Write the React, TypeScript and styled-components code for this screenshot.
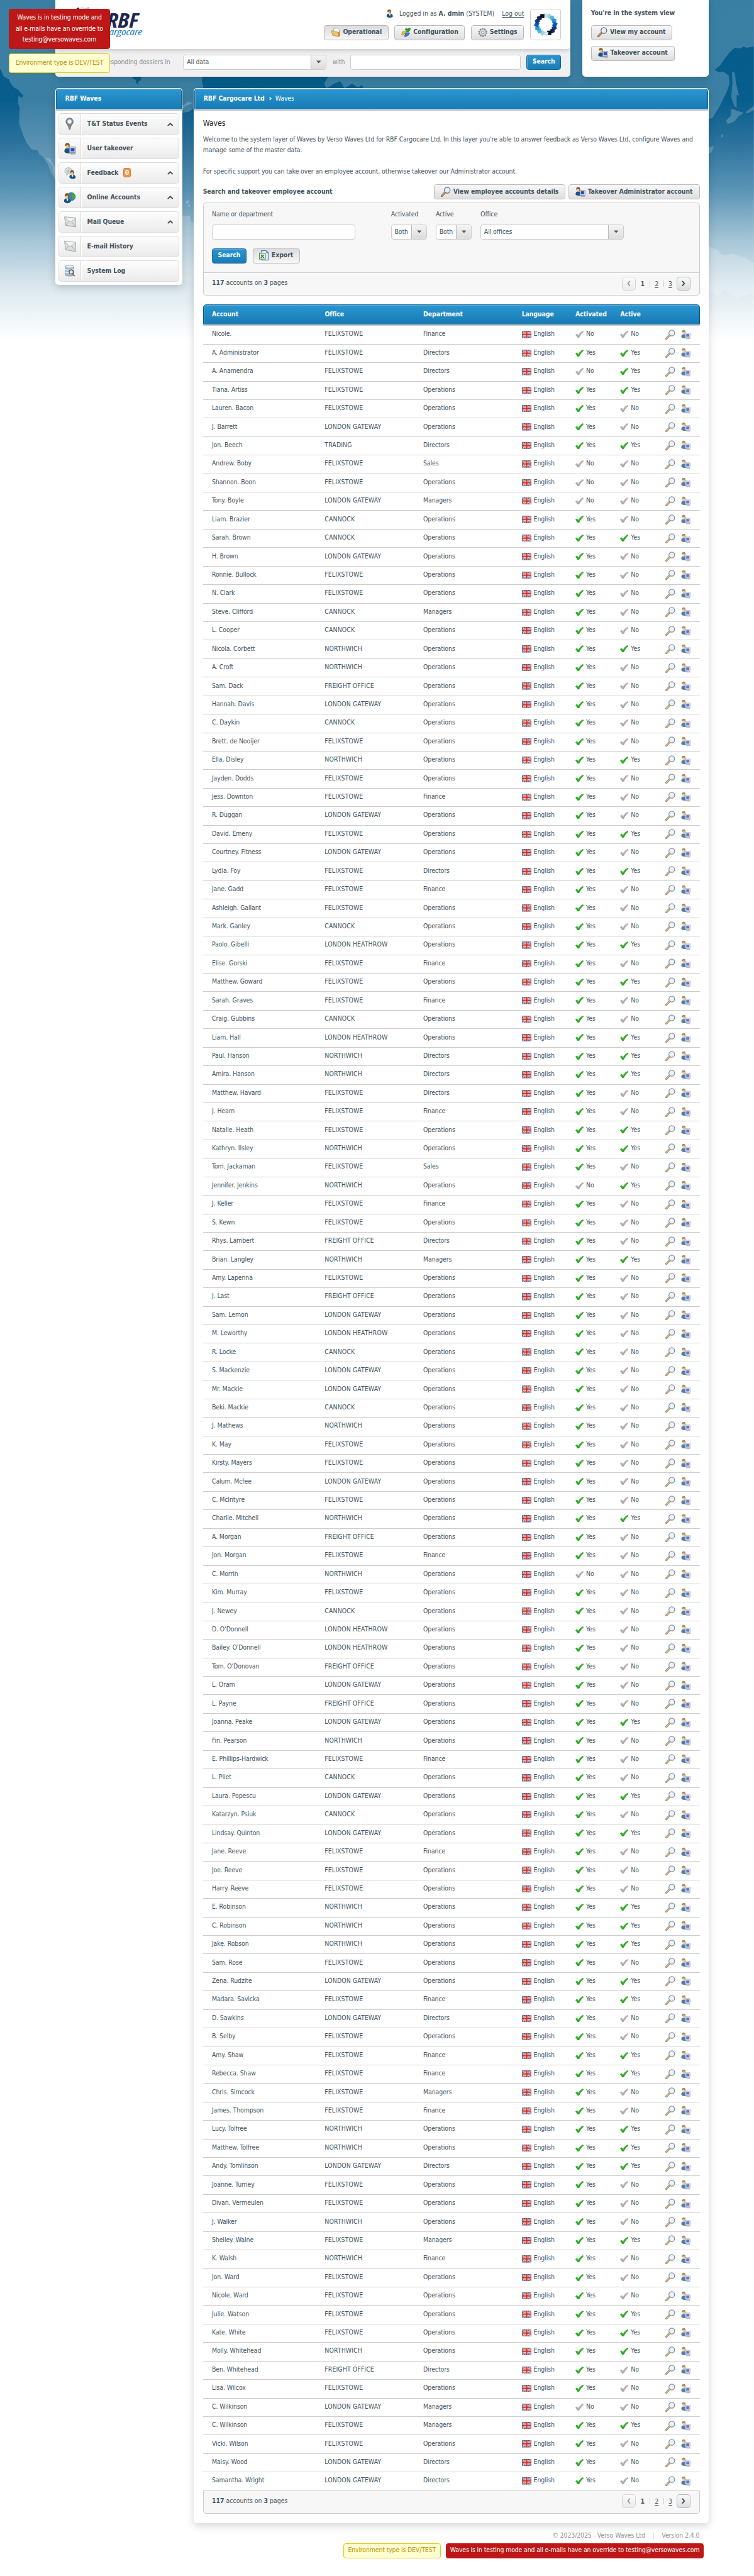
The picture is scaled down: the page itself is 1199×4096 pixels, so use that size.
import React from "react";
import styled, { createGlobalStyle, css } from "styled-components";

const GlobalStyle = createGlobalStyle`
  *, *::before, *::after { box-sizing: border-box; }
  html, body { margin: 0; padding: 0; background: #fff; overflow: hidden; }
`;

const ink = "#44555f";
const line = "#cccccc";

const Page = styled.div`
  zoom: 0.94925;
  position: relative;
  width: 1263px;
  height: 4315px;
  padding-left: 93px;
  overflow: hidden;
  background: #fff;
  color: ${ink};
  font-family: "DejaVu Sans Condensed", "DejaVu Sans", Tahoma, sans-serif;
  font-stretch: condensed;
  font-size: 11px;
  line-height: 18px;
  letter-spacing: -0.096px;
`;

const Backdrop = styled.svg`
  position: absolute;
  left: 0;
  top: 0;
`;

const Wrap = styled.div`
  position: relative;
  width: 1094px;
`;

const Columns = styled.div<{ $top?: number }>`
  display: flex;
  align-items: flex-start;
  gap: 20px;
  margin-top: ${(p) => p.$top ?? 0}px;
`;

const shadow = css`
  box-shadow: 0 4px 14px rgba(0, 0, 0, 0.17);
`;

/* ---------- header ---------- */

const Header = styled.header`
  width: 862px;
  height: 128px;
  background: #f0f0f0;
  border-radius: 0 0 5px 5px;
  overflow: hidden;
  ${shadow}
`;

const HeaderTop = styled.div`
  display: flex;
  justify-content: space-between;
  height: 82px;
  padding: 0 15px;
  background: #fff;
  border-radius: 0 0 5px 5px;
  box-shadow: 0 2px 8px rgba(0, 0, 0, 0.18);
`;

const Brand = styled.div`
  width: 150px;
  padding: 8px 0 0 16px;
`;

const UserArea = styled.div`
  display: flex;
  gap: 10px;
  padding-top: 15px;
`;

const UserStack = styled.div`
  display: flex;
  flex-direction: column;
  align-items: flex-end;
`;

const LoginLine = styled.div`
  display: flex;
  align-items: center;
  height: 16px;
  margin-bottom: 11px;
  white-space: pre;
  letter-spacing: 0;

  svg { margin-right: 10px; }
`;

const Link = styled.a<{ $gap?: number }>`
  margin-left: ${(p) => p.$gap ?? 0}px;
  color: ${ink};
  text-decoration: underline;
  text-underline-offset: 2px;
`;

const ButtonRow = styled.div<{ $gap: number }>`
  display: flex;
  align-items: center;
  gap: ${(p) => p.$gap}px;
`;

const LogoBox = styled.div`
  display: flex;
  align-items: center;
  justify-content: center;
  width: 52px;
  height: 52px;
  border: 1px solid ${line};
  border-radius: 4px;
  background: #fff;
`;

const SearchBar = styled.div`
  display: flex;
  align-items: center;
  height: 46px;
  padding: 0 15px 2px;
  color: #8c8c8c;
`;

const SearchLabel = styled.span<{ $width: number; $after?: number }>`
  width: ${(p) => p.$width}px;
  margin-right: ${(p) => p.$after ?? 0}px;
  text-align: right;
  white-space: nowrap;
`;

const Button = styled.button<{ $width: number; $pressed?: boolean; $primary?: boolean }>`
  display: flex;
  align-items: center;
  justify-content: center;
  gap: 4px;
  flex: none;
  width: ${(p) => p.$width}px;
  height: 25px;
  margin: 0;
  padding: 0 0 1px;
  border: 1px solid #bbb;
  border-radius: 4px;
  background: ${(p) =>
    p.$pressed ? "linear-gradient(#dcdcdc, #f6f6f6)" : "linear-gradient(#f8f8f8, #dedede)"};
  color: ${ink};
  font: inherit;
  font-weight: bold;
  letter-spacing: -0.08px;
  white-space: nowrap;

  span { padding-bottom: 1px; }

  ${(p) =>
    p.$primary &&
    css`
      border-color: #0d5f92;
      background: linear-gradient(#2a94d0, #187cb5);
      box-shadow: inset 1px 1px 0 #4ba9dc;
      color: #fff;
    `}
`;

const Input = styled.input<{ $width: number }>`
  flex: none;
  width: ${(p) => p.$width}px;
  height: 25px;
  border: 1px solid ${line};
  border-radius: 4px;
  background: #fff;
`;

const SelectBox = styled.div<{ $width: number }>`
  display: flex;
  flex: none;
  width: ${(p) => p.$width}px;
  height: 25px;
  border: 1px solid ${line};
  border-radius: 4px;
  background: #fff;
  color: ${ink};
  overflow: hidden;

  > span { flex: 1; padding: 2px 0 0 5px; white-space: nowrap; }
`;

const SelectArrow = styled.i`
  display: flex;
  align-items: center;
  justify-content: center;
  width: 25px;
  border-left: 1px solid #bbb;
  background: linear-gradient(#f4f4f4, #dcdcdc);
`;

const SystemPanel = styled.aside`
  display: flex;
  flex-direction: column;
  width: 212px;
  height: 128px;
  padding: 13px 15px 0;
  border-radius: 0 0 5px 5px;
  background: #fff;
  ${shadow}

  strong { height: 29px; }
  button { margin-bottom: 10px; }
`;

/* ---------- panels ---------- */

const Panel = styled.section<{ $width: number; $height: number }>`
  flex: none;
  width: ${(p) => p.$width}px;
  height: ${(p) => p.$height}px;
  padding: 1px;
  border-radius: 5px;
  background: #fff;
  ${shadow}
`;

const TitleBar = styled.div`
  display: flex;
  align-items: center;
  height: 34px;
  padding: 0 14px 2px 14px;
  border: 1px solid #0b5a8a;
  border-radius: 4px 4px 0 0;
  background: linear-gradient(#2a96d2, #187bb3);
  box-shadow: inset 1px 1px 0 #4ba9dc, 0 1px 0 #fff, 0 2px 0 ${line};
  color: #fff;
  white-space: nowrap;

  svg { margin: 0 6px 0 8px; }
`;

const Menu = styled.nav`
  display: flex;
  flex-direction: column;
  gap: 5px;
  padding: 7px 4px 0;
`;

const MenuItem = styled.a`
  display: flex;
  align-items: center;
  height: 36px;
  border: 1px solid #dadada;
  border-radius: 5px;
  background: linear-gradient(#fdfdfd, #ebebeb);
  font-weight: bold;

  > span { flex: 1; padding: 0 0 1px 10px; }
`;

const MenuIcon = styled.i`
  display: flex;
  align-items: center;
  justify-content: center;
  width: 37px;
  height: 34px;
  border-right: 1px solid #dadada;
  box-shadow: 1px 0 0 #fff;
`;

const Chevron = styled.svg`
  margin-right: 9px;
`;

const CountBadge = styled.em`
  display: inline-block;
  height: 16px;
  margin-left: 8px;
  padding: 0 2px;
  border: 1px solid #e07b1c;
  border-radius: 3px;
  background: #f39549;
  color: #fff;
  font-style: normal;
  line-height: 14px;
`;

const Body = styled.div`
  padding: 15px 14px 0;
`;

const Heading = styled.h1`
  height: 26px;
  margin: 0;
  color: #222;
  font-size: 13px;
  font-weight: normal;
  line-height: 18px;
`;

const Text = styled.p`
  height: 85px;
  margin: 0;
  white-space: pre;
`;

const ActionRow = styled.div`
  display: flex;
  align-items: flex-start;
  justify-content: space-between;
  height: 30px;

  strong { padding-top: 3px; }
`;

const FilterBox = styled.div`
  height: 156px;
  border: 1px solid ${line};
  border-radius: 5px;
  background: #f7f7f7;
`;

const Filters = styled.div`
  display: flex;
  gap: 15px;
  height: 76px;
  padding: 10px 14px 0;
`;

const Field = styled.label<{ $after?: number }>`
  display: flex;
  flex-direction: column;
  gap: 8px;
  margin-right: ${(p) => p.$after ?? 0}px;
`;

const FilterActions = styled.div`
  display: flex;
  gap: 10px;
  height: 41px;
  padding: 0 14px;
  border-bottom: 1px solid ${line};
  box-shadow: 0 1px 0 #fff;
`;

const Summary = styled.div<{ $boxed?: boolean }>`
  display: flex;
  align-items: center;
  justify-content: space-between;
  height: 38px;
  padding: 0 14px 2px;

  ${(p) =>
    p.$boxed &&
    css`
      height: 39px;
      border: 1px solid ${line};
      border-radius: 0 0 5px 5px;
      background: #f7f7f7;
    `}
`;

const Total = styled.span`
  padding-bottom: 2px;
  letter-spacing: 0;
`;

const Pager = styled.div`
  display: flex;
  align-items: center;
`;

const PageButton = styled.button<{ $off?: boolean }>`
  display: flex;
  align-items: center;
  justify-content: center;
  width: 23px;
  height: 23px;
  padding: 0;
  border: 1px solid ${(p) => (p.$off ? "#d6d6d6" : "#b5b5b5")};
  border-radius: 5px;
  background: ${(p) => (p.$off ? "linear-gradient(#fafafa, #ebebeb)" : "linear-gradient(#f8f8f8, #dedede)")};
`;

const PageNumber = styled.span<{ $current?: boolean; $first?: boolean }>`
  width: 23px;
  border-left: ${(p) => (p.$first ? "none" : `1px solid ${line}`)};
  font-weight: ${(p) => (p.$current ? "bold" : "normal")};
  text-align: center;
  text-decoration: ${(p) => (p.$current ? "none" : "underline")};
  text-underline-offset: 2px;
  line-height: 11px;
`;

/* ---------- table ---------- */

const columns = css`
  display: grid;
  grid-template-columns: 189px 165px 165px 90px 75px 76px 26px 16px;
  align-items: center;
  padding-left: 15px;
`;

const TableHead = styled.div`
  ${columns}
  height: 34px;
  margin-top: 15px;
  padding: 0 0 2px 14px;
  border: 1px solid #0b5a8a;
  border-radius: 5px 5px 0 0;
  background: linear-gradient(#2a96d2, #187bb3);
  box-shadow: inset 1px 1px 0 #4ba9dc;
  color: #fff;
  font-weight: bold;
`;

const Rows = styled.div`
  padding-top: 1px;
`;

const Row = styled.div`
  ${columns}
  height: 31px;
  padding-bottom: 3px;
  border-top: 1px solid ${line};
  white-space: nowrap;
`;

const Office = styled.span`
  letter-spacing: 0.1px;
`;

const IconText = styled.span<{ $gap: number }>`
  display: flex;
  align-items: center;
  gap: ${(p) => p.$gap}px;

  svg { position: relative; top: 1px; }
`;

const Action = styled.span`
  display: flex;
  padding-top: 2px;
  opacity: 0.75;
`;

/* ---------- notices and footer ---------- */

const notice = {
  red: css`background: #bd1717; border-color: #bd1717; color: #fff;`,
  yellow: css`background: #ffffcf; border-color: #dfcb11; color: #b9940b;`,
};

const Notice = styled.div<{ $tone: "red" | "yellow"; $width: number; $height: number }>`
  display: flex;
  align-items: center;
  justify-content: center;
  width: ${(p) => p.$width}px;
  height: ${(p) => p.$height}px;
  padding-bottom: 2px;
  border: 1px solid;
  border-radius: 4px;
  letter-spacing: -0.145px;
  text-align: center;
  white-space: pre;
  ${(p) => notice[p.$tone]}
`;

const FloatingNotices = styled.div`
  position: absolute;
  left: 15px;
  top: 15px;
  display: flex;
  flex-direction: column;
  gap: 8px;
`;

const Footer = styled.footer`
  display: flex;
  flex-direction: column;
  gap: 4px;
  align-items: flex-end;
  padding-top: 12px;
`;

const Copyright = styled.div`
  display: flex;
  padding-right: 15px;
  color: #8f8f8f;

  i { width: 28px; text-align: center; font-style: normal; color: ${line}; }
`;

const NoticeRow = styled.div`
  display: flex;
  gap: 9px;
  padding-right: 8px;
`;

/* ---------- icons ---------- */

const Magnifier = () => (
  <svg width="17" height="17" viewBox="0 0 17 17">
    <path d="M1.6 15.4 7 9.6" stroke="#7d5a34" strokeWidth="3.2" strokeLinecap="round" />
    <path d="M1.8 15 7 9.4" stroke="#d6a86b" strokeWidth="1.5" strokeLinecap="round" />
    <circle cx="10.8" cy="5.8" r="4.8" fill="#dff0fb" stroke="#5c6672" strokeWidth="1.3" />
    <path d="M7.8 5.2a3.2 3.2 0 0 1 3-2.6" stroke="#fff" strokeWidth="1.2" fill="none" />
  </svg>
);

const Person = ({ size = 14 }: { size?: number }) => (
  <svg width={(size * 12) / 14} height={size} viewBox="0 0 12 14">
    <path d="M.8 11.2C.6 8.6 2 7.2 4.2 7.2h2.600c2.600 0 4.600 1.600 4.400 4.600-.8 1.400-2.800 2-5 2s-4.600-.8-5.400-2.600Z" fill="#1a5480" />
    <path d="m4 7.400 2.600 3.800L7.400 7.400Z" fill="#e9f1f6" />
    <ellipse cx="5.2" cy="4" rx="2.7" ry="3.5" fill="#eac48c" />
    <path d="M2.2 4.6C1.600 1.800 3 .2 5.400.2c2.400 0 3.600 1.800 3 4.800-.3 1.400-.8 2-1.400 2.200.3-2 .1-3.200-.8-4.200-1.400.8-2.800.8-4 1.600Z" fill="#7a5326" />
  </svg>
);

const PersonScreen = ({ size = 17 }: { size?: number }) => (
  <svg width={size} height={size} viewBox="0 0 17 17">
    <path d="M.5 13C.1 9.600 1.400 7.800 3.800 7.800H6.500c2 0 3.200 1 3.400 3V14.500C6 15.600 2 15.200.5 13Z" fill="#1a5480" />
    <ellipse cx="5" cy="4.200" rx="2.600" ry="3.600" fill="#eac48c" />
    <path d="M1.400 5C.8 2 2.400.2 4.800.2s3.700 1.800 3 5c-.3 1.200-.7 1.900-1.300 2.200.2-2 0-3.200-.9-4.200-1.200.7-3 .9-4.200 1.800Z" fill="#8a6230" />
    <rect x="7.700" y="6" width="8.600" height="8" fill="#d5d8da" stroke="#8a8f94" strokeWidth=".8" />
    <rect x="9.300" y="7.500" width="5.400" height="4.700" fill="#2848e0" />
    <path d="M9.500 16.200h6.500l-1-2H10Z" fill="#b4b8bb" stroke="#85898c" strokeWidth=".6" />
  </svg>
);

const Pin = () => (
  <svg width="14" height="21" viewBox="0 0 14 21">
    <path d="M7 .7a6 6 0 0 1 6 6.200c0 4-4.300 5.500-5.300 13h-1.400C5.300 12.400 1 10.900 1 6.900A6 6 0 0 1 7 .7Z" fill="#7d858b" stroke="#666d72" />
    <circle cx="7" cy="6.700" r="3.700" fill="#eef5fa" stroke="#a8b3ba" />
  </svg>
);

const Feedback = () => (
  <svg width="20" height="20" viewBox="0 0 20 20">
    <path d="M2.500 9.500C0 6.500 1 2 5.500 1 10 .2 13.500 2.500 13 6.500c-.5 3.500-4 4.800-6.500 4.500L4.500 13.500 4.300 10.600Z" fill="#dfe5ea" stroke="#8b99a5" strokeWidth=".9" />
    <path d="M4 4.500h6M3.700 6.500h5M4.500 8.500h4" stroke="#9caab5" />
    <g transform="translate(8 4.600) scale(1 1.080)">
      <Person />
    </g>
  </svg>
);

const Globe = () => (
  <svg width="21" height="20" viewBox="0 0 21 20">
    <circle cx="13" cy="8" r="7" fill="#3d7fc0" stroke="#2d6297" strokeWidth=".6" />
    <path d="M13 1.200c4 .2 6.500 3.200 6.600 6.600-1.200 3.600-2.600 5.400-5.200 6.200-.6-2 1-3.400-.4-5-1.800-1.400-1.200-3 .2-4.200Z" fill="#4ba33c" />
    <g transform="translate(0 2.200) scale(1.080 1.230)">
      <Person />
    </g>
  </svg>
);

const Envelope = () => (
  <svg width="20" height="19" viewBox="0 0 20 19">
    <path d="M.7.900 19 2.300V18L2.500 15Z" fill="#dcdedf" stroke="#8e9294" strokeWidth=".9" />
    <path d="m1 1.200 9 8.300 9-7M2.700 14.800l5.500-7M19 17.700l-7-10" fill="none" stroke="#a3a7a9" />
    <path d="M1.600 1.500 18.500 2.700 10 9.200Z" fill="#f4f5f5" />
  </svg>
);

const Database = () => (
  <svg width="18" height="20" viewBox="0 0 18 20">
    <path d="M1 3C1 .3 15 .3 15 3v14c0 2.700-14 2.700-14 0Z" fill="#a9bccb" stroke="#7b8c9a" strokeWidth=".8" />
    <ellipse cx="8" cy="3" rx="6.600" ry="1.700" fill="#e7eef3" />
    <path d="M1 7.500c1 1.800 13 1.800 14 0M1 12c1 1.800 13 1.800 14 0" fill="none" stroke="#eef4f8" strokeWidth="1.300" />
    <path d="m13 15 3.500 4" stroke="#a9733b" strokeWidth="2.200" />
    <circle cx="10.800" cy="12" r="3.400" fill="#dcebf5" stroke="#3d454d" strokeWidth="1.300" />
  </svg>
);

const Folder = () => (
  <svg width="16" height="16" viewBox="0 0 16 16">
    <path d="M4.500 1.500 11 .6l4 3.700V14L6 11Z" fill="#f3f6f8" stroke="#9aa2a8" strokeWidth=".8" />
    <path d="m12.600 9 1.900-4.500.7 9-2.200 1.900Z" fill="#c08b2f" />
    <path d="M.6 5.500 4 5l1.600 1.600 7.400 1v7.600L3.200 12.600Z" fill="#f0c565" stroke="#b07f2c" strokeWidth=".8" />
  </svg>
);

const Puzzle = () => (
  <svg width="16" height="16" viewBox="0 0 16 16">
    <path d="M6.500 2.500 9 1l1.500 1.500L12.500.6l2.800 1-.6 3-1.700.6-.8 2.300-3-.5Z" fill="#35a135" stroke="#1d6b22" strokeWidth=".7" />
    <path d="M.8 8.500 3.500 6l2 .8L7 5.200l1.600 2-1.500 2.300L5 10.200 2.500 13 .6 11.500l1-1.500Z" fill="#e6c72c" stroke="#8e7515" strokeWidth=".7" />
    <path d="m6.200 9.800 3-1.600L12 9l.8-1.200 1.400 1.400-1.600 3.200L9.700 14l-3.500 1.400L5.500 13l1.200-1.400Z" fill="#3b7fd4" stroke="#1d4b8c" strokeWidth=".7" />
  </svg>
);

const Gear = () => (
  <svg width="16" height="16" viewBox="0 0 16 16">
    <circle cx="8" cy="8" r="6.400" fill="none" stroke="#7f868d" strokeWidth="2.400" strokeDasharray="2.300 1.720" />
    <circle cx="8" cy="8" r="5.400" fill="#d3d8dd" stroke="#878f96" />
    <circle cx="8" cy="8" r="2.200" fill="#f7f8f9" stroke="#7f868d" />
  </svg>
);

const Sheet = () => (
  <svg width="17" height="17" viewBox="0 0 17 17">
    <path d="M3.500.6h8.800l3.700 3.700v12H3.500Z" fill="#dbe7f8" stroke="#4468ae" />
    <path d="M12 .8v3.800h3.800Z" fill="#4b78c9" />
    <rect x=".6" y="5" width="9.800" height="9.800" fill="#eaf5e8" stroke="#3f8a3a" />
    <path d="m3 7.400 5 5.200M8 7.400l-5 5.200" stroke="#2f7a2c" strokeWidth="1.700" />
  </svg>
);

const Flag = () => (
  <svg width="16" height="12" viewBox="0 0 16 12">
    <rect width="16" height="12" fill="#4a6bb5" />
    <path d="m0 0 16 12M16 0 0 12" stroke="#eadfe6" strokeWidth="2.200" />
    <path d="m0 0 16 12M16 0 0 12" stroke="#dc5a58" strokeWidth="1" />
    <path d="M8 0v12M0 6h16" stroke="#f8eeee" strokeWidth="4" />
    <path d="M8 0v12M0 6h16" stroke="#d5301f" strokeWidth="2.300" />
    <rect x=".4" y=".4" width="15.200" height="11.200" fill="none" stroke="#444" strokeOpacity=".4" strokeWidth=".8" />
  </svg>
);

const Check = ({ on }: { on: boolean }) => (
  <svg width="14" height="12" viewBox="0 0 14 12">
    <path
      d="M.3 6.500 2.700 5 5 7.600C6.800 4.600 9 2.200 12.200.3L13.800 1.400C10.200 4.200 7.900 7.400 6.300 11.100L4.100 11.600Z"
      fill={on ? "#27a81c" : "#a9a9a9"}
      stroke={on ? "#1d8f16" : "#9f9f9f"}
      strokeWidth=".5"
    />
    <path d="m1.300 6.600 1.300-.8L5 8.600C7 5 9.300 2.800 12.200 1.100" fill="none" stroke={on ? "#52cc46" : "#c4c4c4"} strokeWidth=".8" />
  </svg>
);

const DownArrow = () => (
  <svg width="8" height="5" viewBox="0 0 8 5">
    <path d="M0 .4h8L4 4.700Z" fill="#555" />
  </svg>
);

const ringColors = ["#cfe9ec", "#9fd6de", "#55b4d8", "#2a93d2", "#0d59b8", "#173c86", "#17264f", "#071226"];

const Ring = ({ size = 42 }: { size?: number }) => (
  <svg width={size} height={size} viewBox="-21 -21 42 42">
    {Array.from({ length: 16 }, (_, i) => {
      const a = (i * 22.5 * Math.PI) / 180;
      return (
        <rect
          key={i}
          x="-3.500"
          y="-3.500"
          width="7"
          height="7"
          fill={ringColors[i % 8]}
          transform={`translate(${Math.sin(a) * 15.2} ${-Math.cos(a) * 15.2}) rotate(${i * 22.5 + 25})`}
        />
      );
    })}
  </svg>
);

const BrandMark = () => (
  <svg width="136" height="60" viewBox="0 0 136 60">
    <path d="m1 8 6-4 5 6-6 6Z" fill="#1b2148" />
    <path d="m7 7 7-6 6 7-7 6Z" fill="#d7edf0" />
    <path d="m16 6 9-3 1 9-8 2Z" fill="#a3d6dc" />
    <text x="55" y="38" fontSize="33" fontWeight="bold" fontStyle="italic" fill="#20264f" textLength="52" lengthAdjust="spacingAndGlyphs" fontFamily="Open Sans, sans-serif">RBF</text>
    <text x="52" y="51" fontSize="16" fontStyle="italic" fill="#1d82c4" textLength="62" lengthAdjust="spacingAndGlyphs" fontFamily="Open Sans, sans-serif">cargocare</text>
  </svg>
);

const WorldMap = () => (
  <Backdrop width="1263" height="600" viewBox="0 0 1263 600">
    <defs>
      <linearGradient id="sea" x1="0" y1="0" x2="0" y2="1">
        <stop offset="0" stopColor="#055c8b" />
        <stop offset=".28" stopColor="#075e8c" />
        <stop offset=".4" stopColor="#2c739d" />
        <stop offset=".53" stopColor="#5a94b5" />
        <stop offset=".67" stopColor="#a5c5d6" />
        <stop offset=".8" stopColor="#dbe7ee" />
        <stop offset=".95" stopColor="#fff" />
      </linearGradient>
    </defs>
    <rect width="1263" height="600" fill="url(#sea)" />
    <g fill="#fff" fillOpacity=".21">
      <path d="M0 0H1263V78L1250 80 1246 78 1240 81 1231 80 1222 88 1215 97 1206 110 1197 117 1204 121 1212 120 1221 127 1222 140 1219 150 1213 163 1206 177 1194 197 1187 200H1187V150H610L606 142 600 147 590 140 577 148 570 136 560 140 547 148 543 140 549 130 547 120H341L338 135 341 148 330 160 325 172 310 178 305 185 305 290H93V302L90 287 88 277 77 265 67 260 63 252 53 250 45 240 39 227 32 207 33 180 30 173 31 160 37 164 39 160 30 150 24 147 18 140 15 133 6 128 3 120 0 115Z" />
      <path d="m1226 120 5 2 2 18 5 20-4-1 0 22-4-4-5-14 2-26Z" />
      <path d="m1225 182 8 3 13 4-9 6-6 8-12 5-3-6 8-8Z" />
      <path d="m1249 188 14-11v7l-11 6ZM1208 226l3-2v5l-3 2ZM1187 247l9-2-4 10-5 2Z" />
      <path d="m305 178 10-8 10 3v8l-8 6-12 2Z" />
      <path d="M72 263 80 275 86 290 93 302V282L84 266Z" />
      <path d="m311 337 5-2v5l-4 2ZM315 343l3-1v4h-3ZM305 362l13-1 2 11 5 2v96h-52l32-30Z" />
      <path d="m1187 413 14 5 10 10 16-3 20 6 16 10v50l-30 8-20-14-10 12-16-10Z" />
    </g>
    <path d="m222 128 14 0 0 6-4 3-1 5-4-5 1-3-6-2Z" fill="#075e8c" />
  </Backdrop>
);

/* ---------- data ---------- */

const offices: Record<string, string> = {
  F: "FELIXSTOWE",
  L: "LONDON GATEWAY",
  H: "LONDON HEATHROW",
  C: "CANNOCK",
  N: "NORTHWICH",
  R: "FREIGHT OFFICE",
  T: "TRADING",
};

const departments: Record<string, string> = {
  O: "Operations",
  D: "Directors",
  F: "Finance",
  M: "Managers",
  S: "Sales",
};

/* name | office, department, activated, active */
const accounts = `Nicole.|FFnn
A. Administrator|FDyy
A. Anamendra|FDny
Tiana. Artiss|FOyy
Lauren. Bacon|FOyn
J. Barrett|LOyn
Jon. Beech|TDyy
Andrew. Boby|FSnn
Shannon. Boon|FOnn
Tony. Boyle|LMnn
Liam. Brazier|COyn
Sarah. Brown|COyy
H. Brown|LOyn
Ronnie. Bullock|FOyn
N. Clark|FOyn
Steve. Clifford|CMyn
L. Cooper|COyn
Nicola. Corbett|NOyy
A. Croft|NOyn
Sam. Dack|ROyn
Hannah. Davis|LOyn
C. Daykin|COyn
Brett. de Nooijer|FOyn
Ella. Disley|NOyy
Jayden. Dodds|FOyn
Jess. Downton|FFyn
R. Duggan|LOyn
David. Emeny|FOyy
Courtney. Fitness|LOyn
Lydia. Foy|FDyy
Jane. Gadd|FFyn
Ashleigh. Gallant|FOyn
Mark. Ganley|COyn
Paolo. Gibelli|HOyy
Elise. Gorski|FFyn
Matthew. Goward|FOyy
Sarah. Graves|FFyn
Craig. Gubbins|COyn
Liam. Hall|HOyy
Paul. Hanson|NDyy
Amira. Hanson|NDyy
Matthew. Havard|FDyn
J. Hearn|FFyn
Natalie. Heath|FOyy
Kathryn. Ilsley|NOyy
Tom. Jackaman|FSyn
Jennifer. Jenkins|NOny
J. Keller|FFyn
S. Kewn|FOyn
Rhys. Lambert|RDyn
Brian. Langley|NMyy
Amy. Lapenna|FOyn
J. Last|ROyn
Sam. Lemon|LOyn
M. Leworthy|HOyn
R. Locke|COyn
S. Mackenzie|LOyn
Mr. Mackie|LOyn
Beki. Mackie|COyn
J. Mathews|NOyn
K. May|FOyn
Kirsty. Mayers|FOyn
Calum. Mcfee|LOyn
C. McIntyre|FOyn
Charlie. Mitchell|NOyy
A. Morgan|ROyn
Jon. Morgan|FFyn
C. Morrin|NOnn
Kim. Murray|FOyn
J. Newey|COyn
D. O'Donnell|HOyn
Bailey. O'Donnell|HOyn
Tom. O'Donovan|ROyn
L. Oram|LOyn
L. Payne|ROyn
Joanna. Peake|LOyy
Fin. Pearson|NOyn
E. Phillips-Hardwick|FFyn
L. Pliet|COyn
Laura. Popescu|LOyy
Katarzyn. Psiuk|COyn
Lindsay. Quinton|LOyy
Jane. Reeve|FFyn
Joe. Reeve|FOyn
Harry. Reeve|FOyn
E. Robinson|NOyy
C. Robinson|NOyy
Jake. Robson|NOyy
Sam. Rose|FOyn
Zena. Rudzite|LOyy
Madara. Savicka|FFyy
D. Sawkins|LDyn
B. Selby|FOyn
Amy. Shaw|FFyy
Rebecca. Shaw|FFyy
Chris. Simcock|FMyn
James. Thompson|FFyn
Lucy. Tolfree|NOyy
Matthew. Tolfree|NOyy
Andy. Tomlinson|LDyy
Joanne. Turney|FOyn
Divan. Vermeulen|FOyn
J. Walker|NOyn
Shelley. Walne|FMyy
K. Walsh|NFyn
Jon. Ward|FOyn
Nicole. Ward|FOyn
Julie. Watson|FOyy
Kate. White|FOyy
Molly. Whitehead|NOyy
Ben. Whitehead|RDyn
Lisa. Wilcox|FOyn
C. Wilkinson|LMnn
C. Wilkinson|FMyy
Vicki. Wilson|FOyn
Maisy. Wood|LDyn
Samantha. Wright|LDyn`
  .split("\n")
  .map((entry) => {
    const [name, code] = entry.split("|");
    return {
      name,
      office: offices[code[0]],
      department: departments[code[1]],
      activated: code[2] === "y",
      active: code[3] === "y",
    };
  });

const menu: { label: string; icon: React.ReactNode; open?: boolean; count?: number }[] = [
  { label: "T&T Status Events", icon: <Pin />, open: true },
  { label: "User takeover", icon: <PersonScreen size={20} /> },
  { label: "Feedback", icon: <Feedback />, open: true, count: 0 },
  { label: "Online Accounts", icon: <Globe />, open: true },
  { label: "Mail Queue", icon: <Envelope />, open: true },
  { label: "E-mail History", icon: <Envelope /> },
  { label: "System Log", icon: <Database /> },
];

/* ---------- composed parts ---------- */

const Select = ({ width, value }: { width: number; value: string }) => (
  <SelectBox $width={width}>
    <span>{value}</span>
    <SelectArrow>
      <DownArrow />
    </SelectArrow>
  </SelectBox>
);

const Pages = () => (
  <Pager>
    <PageButton $off>
      <svg width="6" height="10" viewBox="0 0 6 10">
        <path d="M5 1 1.500 5 5 9" fill="none" stroke="#9a9fa3" strokeWidth="2" />
      </svg>
    </PageButton>
    <PageNumber $current $first>1</PageNumber>
    <PageNumber>2</PageNumber>
    <PageNumber>3</PageNumber>
    <PageButton>
      <svg width="6" height="10" viewBox="0 0 6 10">
        <path d="M1 1 4.500 5 1 9" fill="none" stroke="#3f4d57" strokeWidth="2" />
      </svg>
    </PageButton>
  </Pager>
);

const Count = () => (
  <Total>
    <strong>117</strong> accounts on <strong>3</strong> pages
  </Total>
);

const Flagged = ({ on }: { on: boolean }) => (
  <IconText $gap={4}>
    <Check on={on} />
    {on ? "Yes" : "No"}
  </IconText>
);

export default function App() {
  return (
    <>
      <GlobalStyle />
      <Page>
        <WorldMap />
        <Wrap>
          <Columns>
            <Header>
              <HeaderTop>
                <Brand>
                  <BrandMark />
                </Brand>
                <UserArea>
                  <UserStack>
                    <LoginLine>
                      <Person />
                      Logged in as <strong>A. dmin</strong> (SYSTEM)
                      <Link $gap={13}>Log out</Link>
                    </LoginLine>
                    <ButtonRow $gap={10}>
                      <Button $width={108} $pressed><Folder /><span>Operational</span></Button>
                      <Button $width={118}><Puzzle /><span>Configuration</span></Button>
                      <Button $width={89}><Gear /><span>Settings</span></Button>
                    </ButtonRow>
                  </UserStack>
                  <LogoBox>
                    <Ring />
                  </LogoBox>
                </UserArea>
              </HeaderTop>
              <SearchBar>
                <SearchLabel $width={176} $after={23}>Search for corresponding dossiers in</SearchLabel>
                <ButtonRow $gap={10}>
                  <Select width={240} value="All data" />
                  <SearchLabel $width={20}>with</SearchLabel>
                  <Input $width={285} />
                  <Button $width={58} $primary><span>Search</span></Button>
                </ButtonRow>
              </SearchBar>
            </Header>
            <SystemPanel>
              <strong>You're in the system view</strong>
              <Button $width={136}><Magnifier /><span>View my account</span></Button>
              <Button $width={140}><PersonScreen /><span>Takeover account</span></Button>
            </SystemPanel>
          </Columns>

          <Columns $top={20}>
            <Panel $width={212} $height={329}>
              <TitleBar><strong>RBF Waves</strong></TitleBar>
              <Menu>
                {menu.map((item) => (
                  <MenuItem key={item.label}>
                    <MenuIcon>{item.icon}</MenuIcon>
                    <span>
                      {item.label}
                      {item.count !== undefined && <CountBadge>{item.count}</CountBadge>}
                    </span>
                    {item.open && (
                      <Chevron width="10" height="6" viewBox="0 0 10 6">
                        <path d="m.8 5.400 4.200-4 4.200 4" fill="none" stroke="#4d4d4d" strokeWidth="2" />
                      </Chevron>
                    )}
                  </MenuItem>
                ))}
              </Menu>
            </Panel>

            <Panel $width={862} $height={4078}>
              <TitleBar>
                <strong>RBF Cargocare Ltd</strong>
                <svg width="4" height="6" viewBox="0 0 4 6">
                  <path d="m.6.5 2.500 2.500L.6 5.500" fill="none" stroke="#fff" strokeWidth="1.400" />
                </svg>
                Waves
              </TitleBar>
              <Body>
                <Heading>Waves</Heading>
                <Text>
                  {"Welcome to the system layer of Waves by Verso Waves Ltd for RBF Cargocare Ltd. In this layer you're able to answer feedback as Verso Waves Ltd, configure Waves and\nmanage some of the master data.\n\nFor specific support you can take over an employee account, otherwise takeover our Administrator account."}
                </Text>
                <ActionRow>
                  <strong>Search and takeover employee account</strong>
                  <ButtonRow $gap={5}>
                    <Button $width={220}><Magnifier /><span>View employee accounts details</span></Button>
                    <Button $width={220}><PersonScreen /><span>Takeover Administrator account</span></Button>
                  </ButtonRow>
                </ActionRow>

                <FilterBox>
                  <Filters>
                    <Field $after={45}>Name or department<Input $width={240} /></Field>
                    <Field>Activated<Select width={60} value="Both" /></Field>
                    <Field>Active<Select width={60} value="Both" /></Field>
                    <Field>Office<Select width={240} value="All offices" /></Field>
                  </Filters>
                  <FilterActions>
                    <Button $width={58} $primary><span>Search</span></Button>
                    <Button $width={79} $pressed><Sheet /><span>Export</span></Button>
                  </FilterActions>
                  <Summary><Count /><Pages /></Summary>
                </FilterBox>

                <TableHead>
                  <span>Account</span>
                  <span>Office</span>
                  <span>Department</span>
                  <span>Language</span>
                  <span>Activated</span>
                  <span>Active</span>
                </TableHead>
                <Rows>
                  {accounts.map((account, i) => (
                    <Row key={i}>
                      <span>{account.name}</span>
                      <Office>{account.office}</Office>
                      <span>{account.department}</span>
                      <IconText $gap={4}><Flag />English</IconText>
                      <Flagged on={account.activated} />
                      <Flagged on={account.active} />
                      <Action><Magnifier /></Action>
                      <Action><PersonScreen /></Action>
                    </Row>
                  ))}
                </Rows>
                <Summary $boxed><Count /><Pages /></Summary>
              </Body>
            </Panel>
          </Columns>

          <Footer>
            <Copyright>
              © 2023/2025 - Verso Waves Ltd<i>|</i>Version 2.4.0
            </Copyright>
            <NoticeRow>
              <Notice $tone="yellow" $width={163} $height={25}>Environment type is DEV/TEST</Notice>
              <Notice $tone="red" $width={432} $height={25}>
                Waves is in testing mode and all e-mails have an override to testing@versowaves.com
              </Notice>
            </NoticeRow>
          </Footer>
        </Wrap>

        <FloatingNotices>
          <Notice $tone="red" $width={169} $height={67}>
            {"Waves is in testing mode and\nall e-mails have an override to\ntesting@versowaves.com"}
          </Notice>
          <Notice $tone="yellow" $width={169} $height={32}>Environment type is DEV/TEST</Notice>
        </FloatingNotices>
      </Page>
    </>
  );
}
